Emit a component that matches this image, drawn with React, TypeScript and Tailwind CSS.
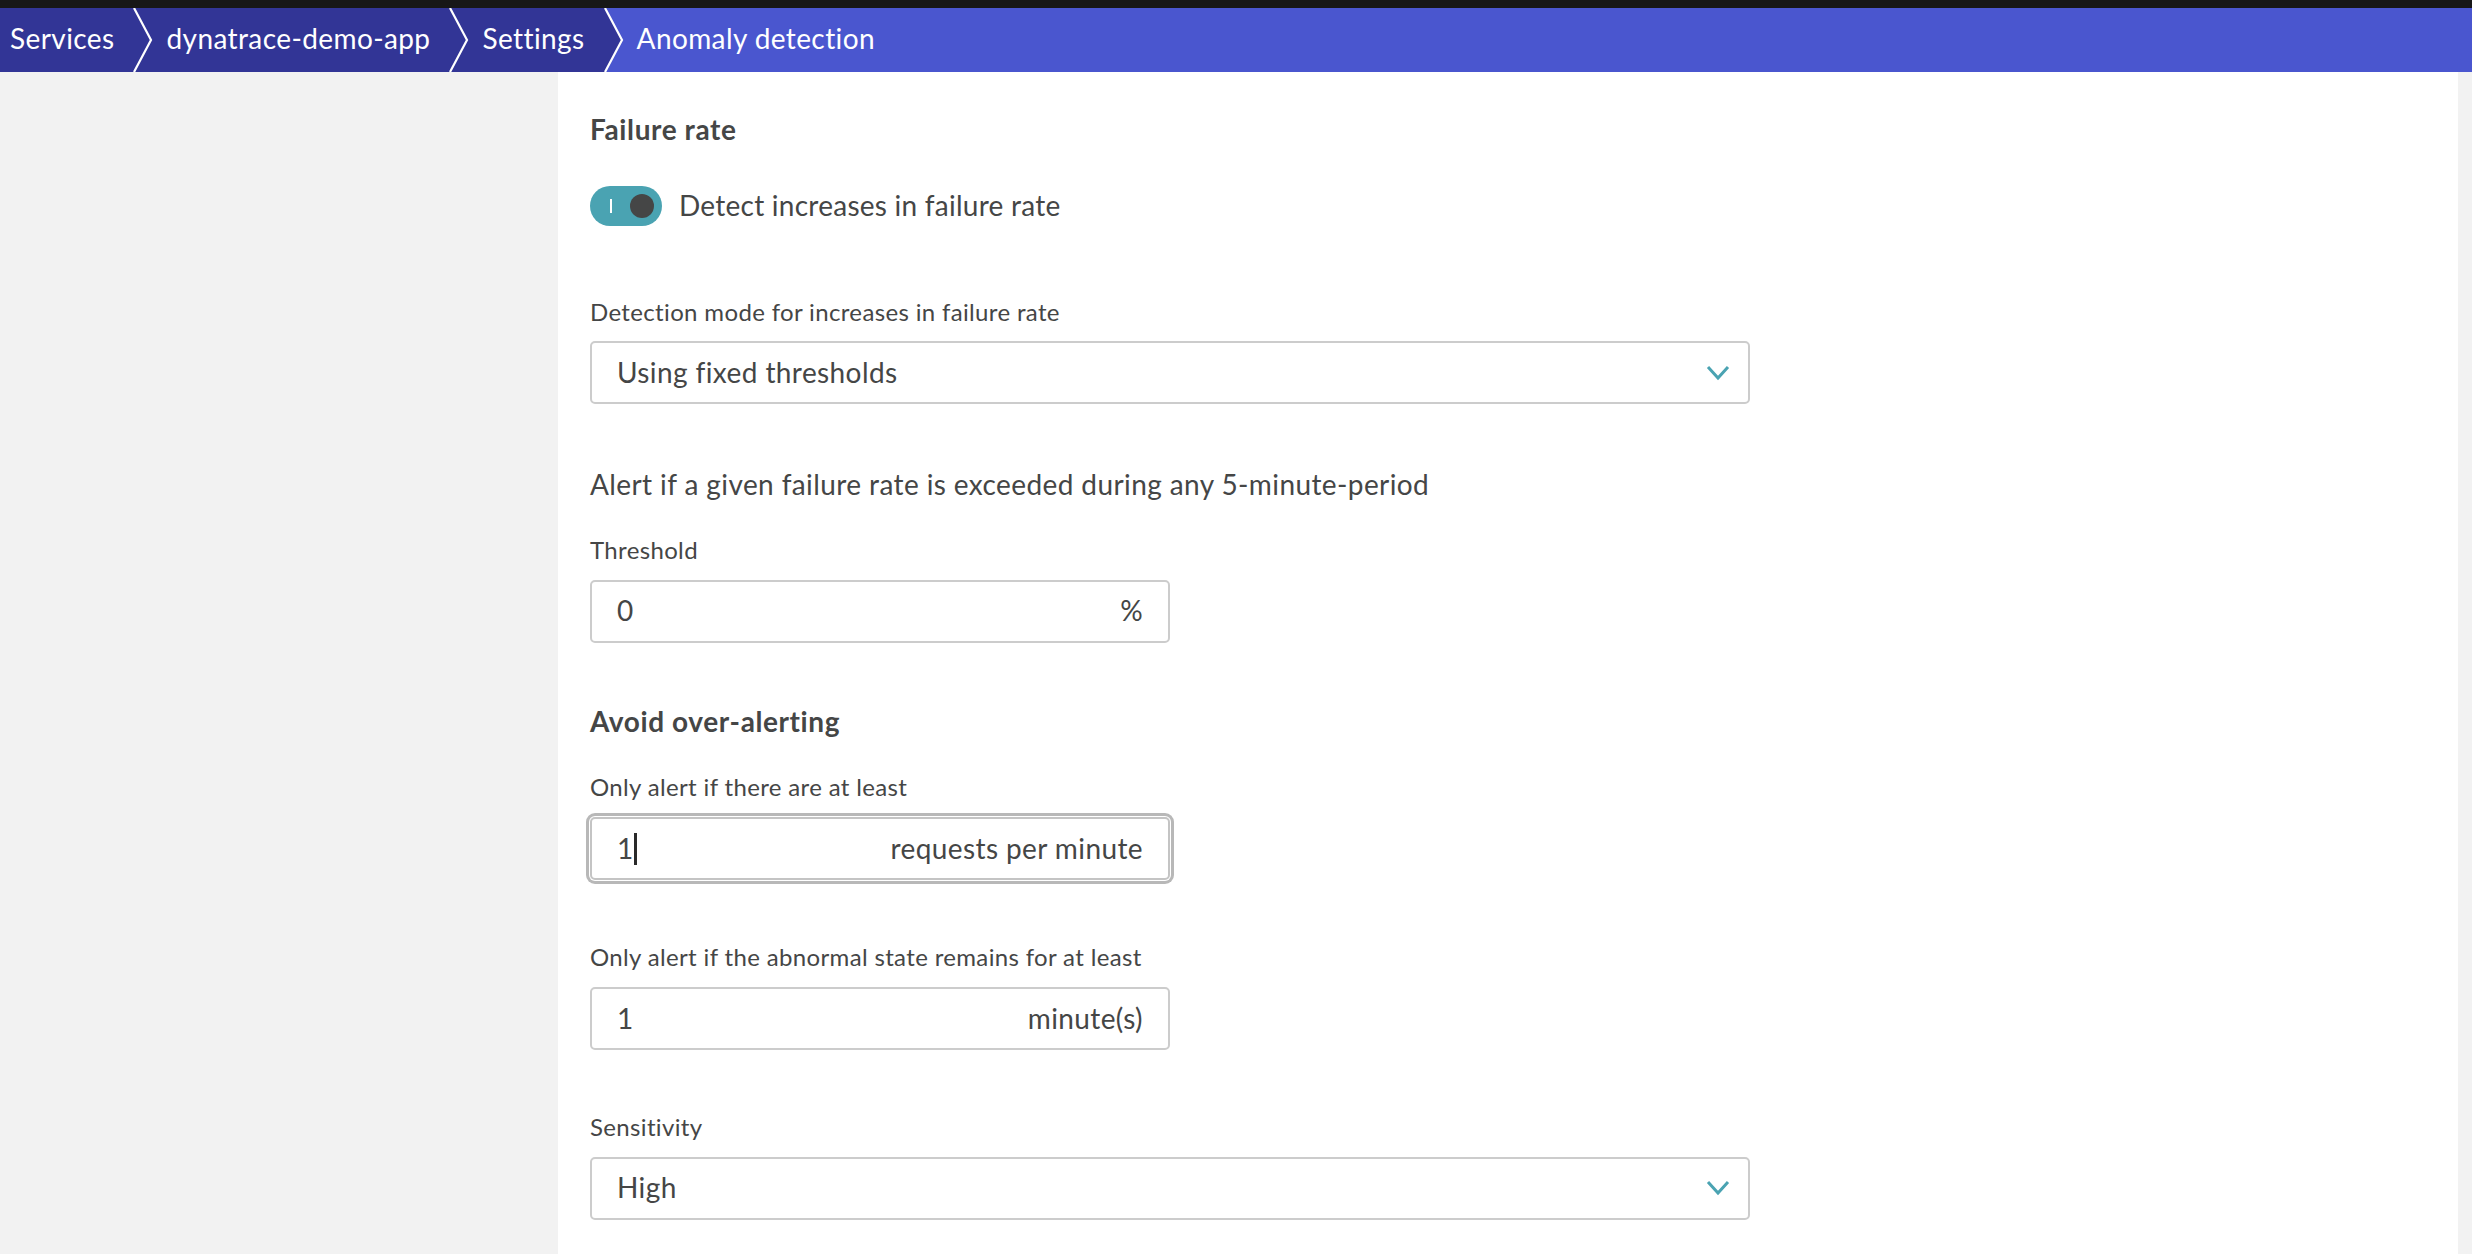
import type { FC } from "react";

const DARK = "#323596";
const ACTIVE = "#4a56cf";

const crumbs = ["Services", "dynatrace-demo-app", "Settings", "Anomaly detection"];

// arrow-shaped separator between two breadcrumb segments
const Separator: FC<{ left: string; right: string }> = ({ left, right }) => (
  <svg width="20" height="64" viewBox="0 0 20 64" className="shrink-0 block">
    <polygon points="0,0 1,0 18,32 1,64 0,64" fill={left} />
    <polygon points="1,0 20,0 20,64 1,64 18,32" fill={right} />
    <polyline points="1,0 18,32 1,64" fill="none" stroke="#fff" strokeWidth="2.2" />
  </svg>
);

const Breadcrumb: FC = () => (
  <div className="flex h-[64px] w-full items-stretch" style={{ background: ACTIVE }}>
    {crumbs.map((c, i) => {
      const last = i === crumbs.length - 1;
      const bg = last ? ACTIVE : DARK;
      return (
        <div key={c} className="flex items-stretch">
          <div
            className={`flex items-center pb-[5px] text-[28px] leading-none tracking-[0.4px] text-white ${
              i === 0 ? "pl-[10px]" : "pl-[13px]"
            } ${last ? "pr-[13px]" : "pr-[19px]"}`}
            style={{ background: bg }}
          >
            {c}
          </div>
          {!last && <Separator left={DARK} right={i + 1 === crumbs.length - 1 ? ACTIVE : DARK} />}
        </div>
      );
    })}
  </div>
);

const Chevron: FC = () => (
  <svg width="24" height="16" viewBox="0 0 24 16" className="shrink-0">
    <polyline points="2,2 12,13 22,2" fill="none" stroke="#4aa3b2" strokeWidth="3" />
  </svg>
);

const Label: FC<{ text: string }> = ({ text }) => (
  <div className="mb-[15px] text-[24px] leading-[1.2] tracking-[0.35px] text-[#454646]">{text}</div>
);

const Select: FC<{ value: string }> = ({ value }) => (
  <div className="flex h-[63px] w-[1160px] items-center justify-between rounded-[5px] border-2 border-[#cccccc] bg-white pl-[25px] pr-[18px]">
    <span className="text-[28px] leading-[1.2] tracking-[0.4px] text-[#454646]">{value}</span>
    <Chevron />
  </div>
);

const NumberInput: FC<{ value: string; unit: string; focused?: boolean }> = ({
  value,
  unit,
  focused,
}) => (
  <div
    className={`flex h-[63px] w-[580px] items-center justify-between rounded-[5px] border-2 bg-white pl-[25px] pr-[25px] ${
      focused
        ? "border-[#c4c4c4] shadow-[0_0_0_1px_#fff,0_0_0_4px_#b8b8b8]"
        : "border-[#cccccc]"
    }`}
  >
    <span className="flex items-center text-[28px] leading-[1.2] text-[#454646]">
      {value}
      {focused && <span className="ml-[1px] inline-block h-[32px] w-[3px] bg-[#2a2a2a]" />}
    </span>
    <span className="text-[28px] leading-[1.2] tracking-[0.4px] text-[#454646]">{unit}</span>
  </div>
);

const Toggle: FC = () => (
  <div className="relative flex h-[40px] w-[72px] shrink-0 items-center rounded-full bg-[#4aa3b2]">
    <span className="absolute left-[20px] top-[13px] h-[14px] w-[2px] bg-white" />
    <span className="absolute right-[8px] top-[8px] h-[24px] w-[24px] rounded-full bg-[#454646]" />
  </div>
);

export default function App() {
  return (
    <div className="flex h-screen w-full flex-col overflow-hidden bg-white font-['Lato','Open_Sans',sans-serif]">
      <div className="h-[8px] w-full bg-[#171717]" />
      <Breadcrumb />
      <div className="flex min-h-0 flex-1">
        <aside className="w-[558px] shrink-0 bg-[#f2f2f2]" />
        <main className="flex-1 pl-[32px] pt-[41px] text-[#454646]">
          <h2 className="text-[28px] font-bold leading-[1.2] tracking-[0.6px]">Failure rate</h2>

          <div className="mt-[39px] flex items-center gap-[17px]">
            <Toggle />
            <span className="text-[28px] leading-[1.2] tracking-[0.25px]">
              Detect increases in failure rate
            </span>
          </div>

          <div className="mt-[72px]">
            <Label text="Detection mode for increases in failure rate" />
            <Select value="Using fixed thresholds" />
          </div>

          <p className="mt-[64px] text-[28px] leading-[1.2] tracking-[0.4px]">
            Alert if a given failure rate is exceeded during any 5-minute-period
          </p>

          <div className="mt-[34px]">
            <Label text="Threshold" />
            <NumberInput value="0" unit="%" />
          </div>

          <h2 className="mt-[62px] text-[28px] font-bold leading-[1.2] tracking-[0.6px]">
            Avoid over-alerting
          </h2>

          <div className="mt-[35px]">
            <Label text="Only alert if there are at least" />
            <NumberInput value="1" unit="requests per minute" focused />
          </div>

          <div className="mt-[63px]">
            <Label text="Only alert if the abnormal state remains for at least" />
            <NumberInput value="1" unit="minute(s)" />
          </div>

          <div className="mt-[63px]">
            <Label text="Sensitivity" />
            <Select value="High" />
          </div>
        </main>
        <div className="w-[14px] shrink-0 bg-[#f2f2f2]" />
      </div>
    </div>
  );
}
